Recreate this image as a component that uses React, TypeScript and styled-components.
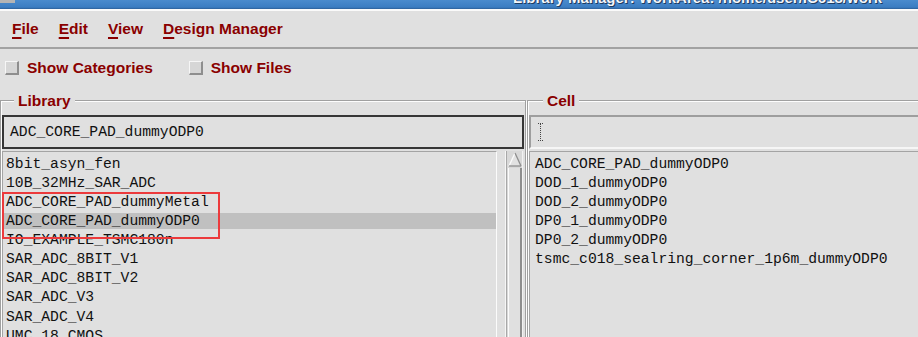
import React from 'react'
import styled, { createGlobalStyle } from 'styled-components'

const GlobalStyle = createGlobalStyle`
  html, body {
    margin: 0;
    padding: 0;
  }
  body {
    width: 918px;
    height: 337px;
    overflow: hidden;
    background: #e0e0e0;
    font-family: "Liberation Sans", Arial, sans-serif;
  }
`

const Window = styled.div`
  width: 918px;
  height: 337px;
  overflow: hidden;
  background: #e0e0e0;
  display: flex;
  flex-direction: column;
`

const TitleBar = styled.div`
  flex: none;
  height: 9px;
  display: flex;
  overflow: hidden;
  background: linear-gradient(#4a8bcd, #3b7dc2 80%, #2c5f98);
  border-bottom: 2px solid #fafafa;
`

const TitleIcon = styled.div`
  width: 15px;
  height: 3px;
  background: #b4b4b4;
`

const TitleText = styled.div`
  margin: -10px 0 0 498px;
  font: bold 15px/16px "Liberation Sans", Arial, sans-serif;
  color: #f4f6fa;
  white-space: nowrap;
  text-shadow: 0 0 1px #1b3352, 1px 1px 0 #1f3d63;
`

const MenuBar = styled.div`
  flex: none;
  height: 36px;
  display: flex;
  align-items: center;
  gap: 20px;
  padding-left: 12px;
  border-bottom: 2px solid #a2a2a2;
`

const MenuItem = styled.span`
  font: bold 15.5px "Liberation Sans", Arial, sans-serif;
  color: #8a0000;
  u {
    text-decoration-thickness: 2px;
    text-underline-offset: 3px;
  }
`

const OptionsRow = styled.div`
  flex: none;
  height: 43px;
  box-sizing: border-box;
  padding: 0 0 5px 5px;
  display: flex;
  align-items: center;
  gap: 36px;
`

const Option = styled.label`
  display: flex;
  align-items: center;
  gap: 8px;
  font: bold 15.5px "Liberation Sans", Arial, sans-serif;
  color: #8a0000;
`

const CheckBox = styled.span`
  width: 14px;
  height: 14px;
  box-sizing: border-box;
  background: #d6d6d6;
  border-style: solid;
  border-width: 1px 2px 2px 1px;
  border-color: #f6f6f6 #8e8e8e #8e8e8e #f6f6f6;
`

const Browser = styled.div`
  flex: none;
  width: 926px;
  display: grid;
  grid-template-columns: 526px 1fr;
  column-gap: 1px;
`

const Group = styled.fieldset`
  margin: 0;
  padding: 6px 0 0;
  min-width: 0;
  height: 280px;
  border: 1px solid #a0a0a0;
  box-shadow: inset 1px 1px 0 #fdfdfd, 1px 1px 0 #fdfdfd;
`

const Legend = styled.legend<{ $indent: number }>`
  margin-left: ${p => p.$indent}px;
  padding: 0 4px;
  font: bold 15.5px/17px "Liberation Sans", Arial, sans-serif;
  color: #8a0000;
  background: #e0e0e0;
`

const Field = styled.div<{ $focused?: boolean }>`
  height: 34px;
  box-sizing: border-box;
  margin: 0 1px;
  padding-left: 6px;
  display: flex;
  align-items: center;
  border: 2px solid;
  border-color: ${p =>
    p.$focused ? '#363636' : '#9e9e9e #f6f6f6 #f6f6f6 #9e9e9e'};
  font: 14.7px/30px "Liberation Mono", monospace;
  color: #111;
`

const ListArea = styled.div<{ $withBar?: boolean }>`
  position: relative;
  margin: 2px 2px 0 1px;
  display: grid;
  grid-template-columns: ${p => (p.$withBar ? '495px 18px' : '1fr')};
  column-gap: 8px;
  height: 200px;
`

const List = styled.div`
  border: 1px solid;
  border-color: #a4a4a4 #fbfbfb #fbfbfb #a4a4a4;
  padding-top: 3.6px;
  display: flex;
  flex-direction: column;
  gap: 3.14px;
`

const Row = styled.div<{ $selected?: boolean; $inset: number }>`
  height: 16px;
  flex: none;
  padding-left: ${p => p.$inset}px;
  font: 14.7px/16px "Liberation Mono", monospace;
  color: #111;
  white-space: nowrap;
  background: ${p => (p.$selected ? '#c0c0c0' : 'transparent')};
`

const ScrollBar = styled.div`
  display: flex;
  flex-direction: column;
  box-sizing: border-box;
  border-left: 1px solid #f6f6f6;
  border-right: 1px solid #f2f2f2;
  padding: 1px 0 0 2px;
  background: #d8d8d8;
  box-shadow: inset 1px 0 0 #a8a8a8;
`

const Thumb = styled.div`
  margin-top: 1px;
  width: 14px;
  height: 200px;
  box-sizing: border-box;
  background: #e0e0e0;
  border-left: 1px solid #fbfbfb;
  border-right: 2px solid #8e8e8e;
`

const Annotation = styled.div`
  position: absolute;
  left: 0;
  top: 41px;
  width: 218px;
  height: 47px;
  box-sizing: border-box;
  border: 2px solid #ec3a3c;
  pointer-events: none;
`

const UpArrow = () => (
  <svg width="14" height="15" viewBox="0 0 14 15">
    <polygon points="7,1 1,14 13,14" fill="#e2e2e2" />
    <line x1="7" y1="1" x2="1" y2="14" stroke="#fbfbfb" strokeWidth="1.3" />
    <line x1="7" y1="1" x2="13" y2="14" stroke="#8e8e8e" strokeWidth="1.3" />
    <line x1="1" y1="14" x2="13" y2="14" stroke="#8e8e8e" strokeWidth="1.3" />
  </svg>
)

const IBeam = () => (
  <svg width="7" height="20" viewBox="0 0 7 20">
    <line x1="3.5" y1="2" x2="3.5" y2="18" stroke="#444" strokeWidth="1" strokeDasharray="1 1" />
    <line x1="1" y1="1.5" x2="6" y2="1.5" stroke="#444" strokeWidth="1" strokeDasharray="1 1" />
    <line x1="1" y1="18.5" x2="6" y2="18.5" stroke="#444" strokeWidth="1" strokeDasharray="1 1" />
  </svg>
)

const menus = ['File', 'Edit', 'View', 'Design Manager']

const libraries = [
  '8bit_asyn_fen',
  '10B_32MHz_SAR_ADC',
  'ADC_CORE_PAD_dummyMetal',
  'ADC_CORE_PAD_dummyODP0',
  'IO_EXAMPLE_TSMC180n',
  'SAR_ADC_8BIT_V1',
  'SAR_ADC_8BIT_V2',
  'SAR_ADC_V3',
  'SAR_ADC_V4',
  'UMC_18_CMOS',
  'analogLib',
]

const cells = [
  'ADC_CORE_PAD_dummyODP0',
  'DOD_1_dummyODP0',
  'DOD_2_dummyODP0',
  'DP0_1_dummyODP0',
  'DP0_2_dummyODP0',
  'tsmc_c018_sealring_corner_1p6m_dummyODP0',
]

const selectedLibrary = 'ADC_CORE_PAD_dummyODP0'

const App = () => (
  <>
    <GlobalStyle />
    <Window>
      <TitleBar>
        <TitleIcon />
        <TitleText>Library Manager: WorkArea: /home/user/IC618/work</TitleText>
      </TitleBar>
      <MenuBar>
        {menus.map(name => (
          <MenuItem key={name}>
            <u>{name[0]}</u>
            {name.slice(1)}
          </MenuItem>
        ))}
      </MenuBar>
      <OptionsRow>
        <Option>
          <CheckBox />
          Show Categories
        </Option>
        <Option>
          <CheckBox />
          Show Files
        </Option>
      </OptionsRow>
      <Browser>
        <Group>
          <Legend $indent={13}>Library</Legend>
          <Field $focused>{selectedLibrary}</Field>
          <ListArea $withBar>
            <List>
              {libraries.map(lib => (
                <Row key={lib} $inset={3} $selected={lib === selectedLibrary}>
                  {lib}
                </Row>
              ))}
            </List>
            <ScrollBar>
              <UpArrow />
              <Thumb />
            </ScrollBar>
            <Annotation />
          </ListArea>
        </Group>
        <Group>
          <Legend $indent={15}>Cell</Legend>
          <Field>
            <IBeam />
          </Field>
          <ListArea>
            <List>
              {cells.map(cell => (
                <Row key={cell} $inset={5}>
                  {cell}
                </Row>
              ))}
            </List>
          </ListArea>
        </Group>
      </Browser>
    </Window>
  </>
)

export default App
